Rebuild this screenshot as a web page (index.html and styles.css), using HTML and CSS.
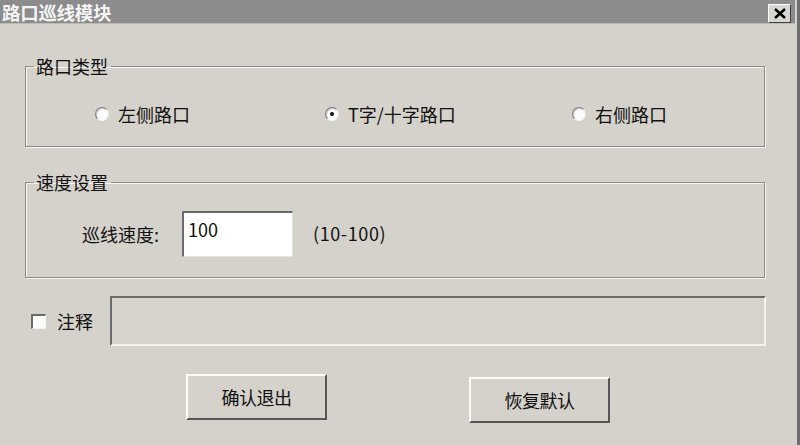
FILE: index.html
```html
<!DOCTYPE html>
<html lang="zh">
<head>
<meta charset="utf-8">
<title>路口巡线模块</title>
<link rel="stylesheet" href="styles.css">
</head>
<body>
<div class="window">
  <div class="titlebar">
    <span class="title">路口巡线模块</span>
    <span class="close"><svg width="12" height="11" viewBox="0 0 12 11"><path d="M1 1 L11 10 M11 1 L1 10" stroke="#000" stroke-width="2.4"/></svg></span>
  </div>
  <div class="body">
    <fieldset class="group group-type">
      <legend>路口类型</legend>
      <div class="radio-row">
        <label class="radio-item"><span class="radio"></span><span>左侧路口</span></label>
        <label class="radio-item"><span class="radio checked"></span><span>T字/十字路口</span></label>
        <label class="radio-item"><span class="radio"></span><span>右侧路口</span></label>
      </div>
    </fieldset>
    <fieldset class="group group-speed">
      <legend>速度设置</legend>
      <div class="speed-row">
        <span class="speed-label">巡线速度:</span>
        <span class="input">100</span>
        <span class="range">(10-100)</span>
      </div>
    </fieldset>
    <div class="note-row">
      <span class="checkbox"></span>
      <span class="note-label">注释</span>
      <span class="note-field"></span>
    </div>
    <div class="btn-row">
      <span class="btn">确认退出</span>
      <span class="btn btn-second">恢复默认</span>
    </div>
  </div>
</div>
</body>
</html>
```

FILE: styles.css
```css
* { box-sizing: border-box; }
html, body {
  margin: 0;
  padding: 0;
}
body {
  width: 800px;
  height: 445px;
  overflow: hidden;
  background: #d5d2cb;
  font-family: "Noto Sans CJK SC", "Noto Sans", sans-serif;
  font-size: 18px;
  color: #111;
}
.window {
  width: 800px;
  height: 445px;
  border-right: 3px solid #6e6e6e;
  padding-right: 2px;
  background: #d5d2cb;
}
.titlebar {
  height: 24px;
  background: #8c8c8c;
  border-bottom: 1px solid #bdbab4;
  display: flex;
  align-items: center;
  justify-content: space-between;
  padding: 0 0 0 2px;
}
.title {
  color: #f4f4f4;
  font-weight: bold;
  font-size: 18.5px;
  line-height: 24px;
  letter-spacing: -0.3px;
}
.close {
  width: 23px;
  height: 19px;
  margin-top: 3px;
  margin-right: 4px;
  background: #d8d6d2;
  border-top: 1px solid #fff;
  border-left: 1px solid #fff;
  border-right: 1px solid #404040;
  border-bottom: 1px solid #404040;
  display: flex;
  align-items: center;
  justify-content: center;
}
.body {
  padding: 31px 0 0 25px;
}
.group {
  margin: 0;
  width: 740px;
  padding: 0;
  border: 1px solid #8a8a88;
  box-shadow: inset 1px 1px 0 #f6f5f2, 1px 1px 0 #f6f5f2;
  min-width: 0;
}
.group legend {
  margin-left: 8px;
  padding: 0 3px 0 2px;
  line-height: 22px;
  font-size: 18px;
}
.group-type {
  height: 92px;
}
.radio-row {
  display: grid;
  grid-template-columns: 230px 247px auto;
  padding: 26px 0 0 69px;
  height: 48px;
}
.radio-item {
  display: flex;
  align-items: center;
  height: 22px;
  gap: 9px;
}
.radio {
  width: 14px;
  height: 14px;
  border-radius: 50%;
  background: #fbfbfb;
  border: 1px solid;
  border-color: #7c7c7c #e8e8e8 #f8f8f8 #7c7c7c;
  box-shadow: inset 1px 1px 0 #c4c4c4;
  position: relative;
  flex: none;
}
.radio.checked::after {
  content: "";
  position: absolute;
  left: 4px;
  top: 4px;
  width: 4px;
  height: 4px;
  border-radius: 50%;
  background: #111;
}
.group-speed {
  margin-top: 24px;
  height: 107px;
}
.speed-row {
  display: flex;
  align-items: center;
  padding: 18px 0 0 56px;
}
.speed-label {
  width: 100px;
}
.input {
  width: 111px;
  height: 46px;
  background: #fff;
  border-top: 2px solid #6a6a6a;
  border-left: 2px solid #6a6a6a;
  border-right: 1px solid #e6e4e0;
  border-bottom: 1px solid #e6e4e0;
  padding: 4px 0 0 4px;
  font-size: 18px;
  line-height: 24px;
  align-self: flex-start;
}
.range {
  margin-left: 20px;
  margin-top: -3px;
  letter-spacing: 0.6px;
}
.note-row {
  display: flex;
  align-items: center;
  margin-top: 18px;
  padding-left: 6px;
}
.checkbox {
  width: 15px;
  height: 15px;
  background: #fbfbfb;
  border-top: 2px solid #6c6c6c;
  border-left: 2px solid #6c6c6c;
  border-right: 1px solid #f4f4f4;
  border-bottom: 1px solid #f4f4f4;
}
.note-label {
  margin-left: 11px;
  width: 53px;
}
.note-field {
  width: 656px;
  height: 50px;
  border-top: 2px solid #6a6a6a;
  border-left: 2px solid #6a6a6a;
  border-right: 2px solid #f4f3f0;
  border-bottom: 2px solid #f4f3f0;
  background: #d6d3cc;
}
.btn-row {
  display: flex;
  align-items: flex-start;
  margin-top: 28px;
  padding-left: 161px;
  gap: 142px;
}
.btn {
  width: 141px;
  height: 46px;
  display: flex;
  align-items: center;
  justify-content: center;
  background: #d5d2cb;
  border-top: 2px solid #fbfbf9;
  border-left: 2px solid #fbfbf9;
  border-right: 2px solid #555;
  border-bottom: 2px solid #555;
  font-size: 18px;
  letter-spacing: -0.5px;
}
.btn-second {
  margin-top: 3px;
}
```
